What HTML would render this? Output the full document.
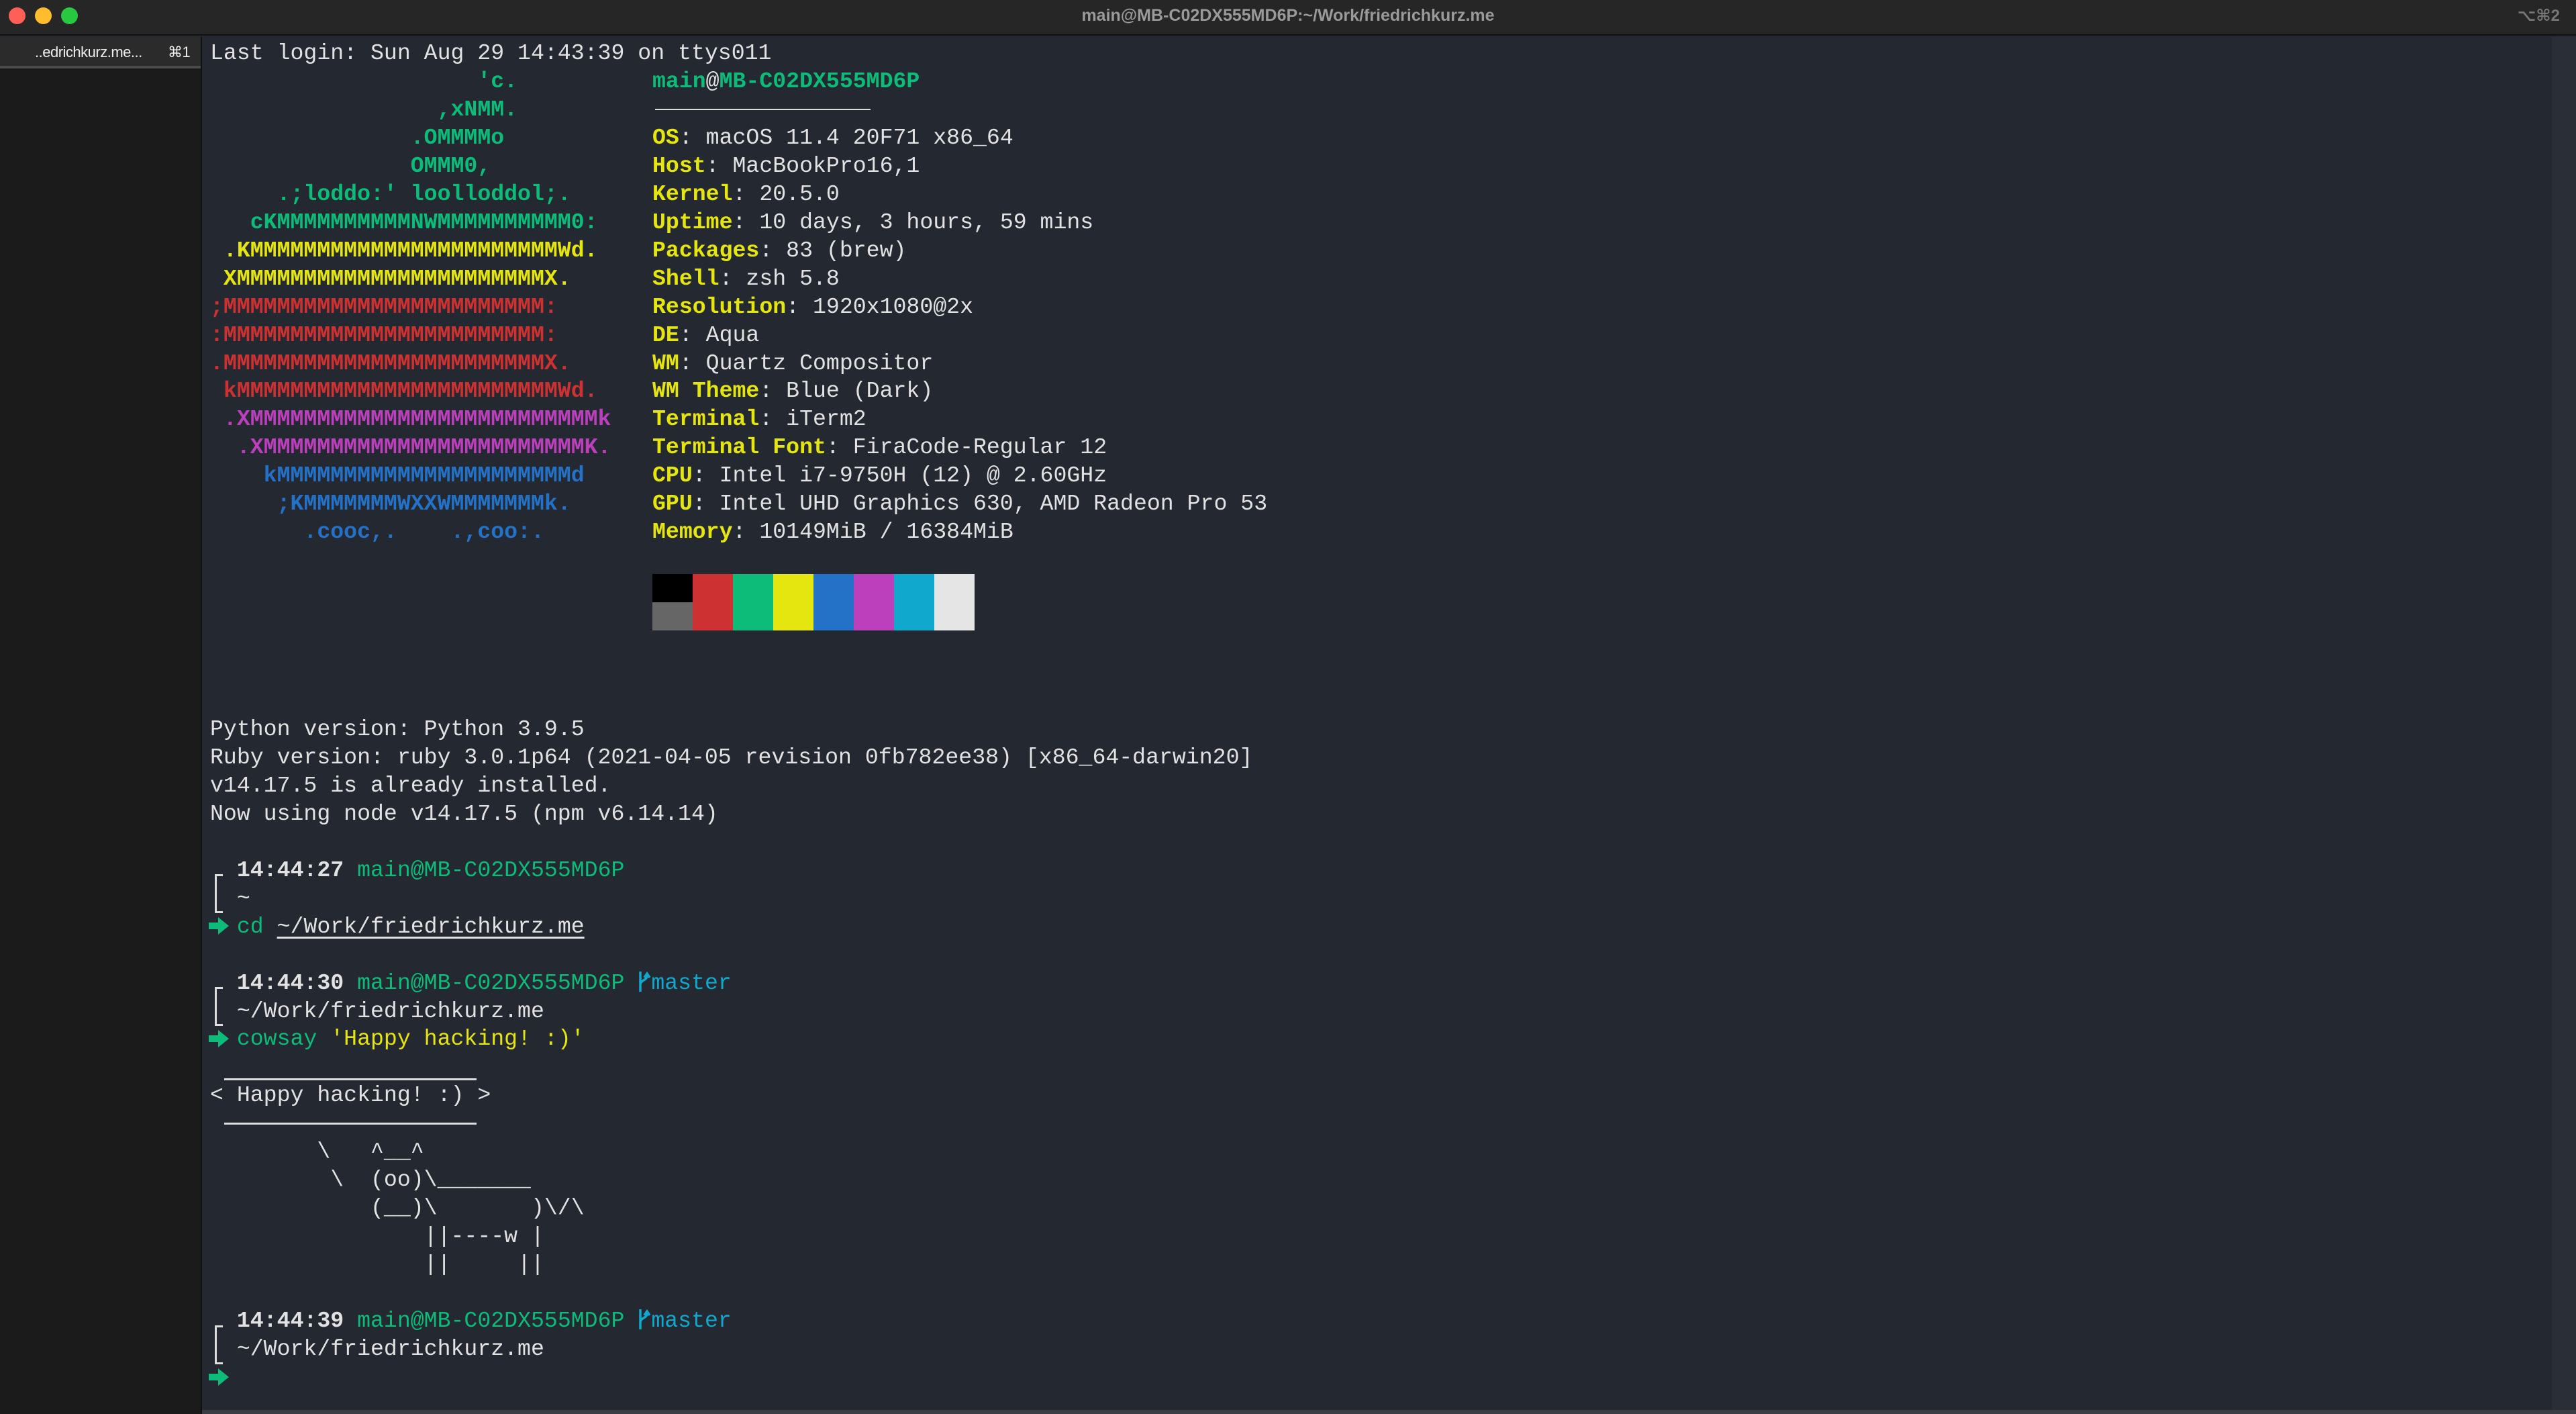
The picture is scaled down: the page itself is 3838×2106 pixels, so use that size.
<!DOCTYPE html>
<html><head><meta charset="utf-8">
<style>
*{margin:0;padding:0;box-sizing:border-box}
html,body{width:3838px;height:2106px;overflow:hidden;background:#242830}
body{position:relative;font-family:"Liberation Mono","DejaVu Sans Mono",monospace}
.title{position:absolute;left:0;top:0;width:3838px;height:53px;background:#262626;border-bottom:2px solid #111}
.tl{position:absolute;top:11px;width:25px;height:25px;border-radius:50%}
.ttext{position:absolute;left:0;width:3838px;top:9px;text-align:center;color:#9a9a9a;font:bold 25px "Liberation Sans",sans-serif}
.kbd{position:absolute;right:24px;top:9px;color:#777;font:bold 24px "Liberation Sans","DejaVu Sans",sans-serif}
.side{position:absolute;left:0;top:55px;width:301px;height:2051px;background:#1b1b1b;border-right:2px solid #111}
.tab{position:absolute;left:0;top:0;width:299px;height:47px;background:#2b2b2b;border-bottom:4px solid #4a4a4a}
.tab span{position:absolute;top:10px;color:#eee;font:22px "Liberation Sans","DejaVu Sans",sans-serif;letter-spacing:-0.5px}
.scroll{position:absolute;right:0;top:55px;width:36px;height:2051px;background:#2a2e36}
.bottom{position:absolute;left:301px;right:0;bottom:0;height:6px;background:#3a3d44}
pre{position:absolute;font-family:"Liberation Mono","DejaVu Sans Mono",monospace;font-size:33.2px;line-height:41.96px;color:#e2e2e2;white-space:pre}
.g{color:#0dbc79}.y{color:#e5e510}.r{color:#cd3131}.m{color:#bc3fbc}.b{color:#2472c8}.c{color:#11a8cd}
.k{font-weight:bold}
.u{text-decoration:underline;text-underline-offset:6px}
.blk{position:absolute;width:60px}
.br{position:absolute;left:320px;width:12px;border:3px solid #ddd;border-right:none;height:58px}
.hl{position:absolute;height:3px;background:#ddd}
.ar{position:absolute;left:311px;width:30px;height:26px}
.brn{display:inline-block;width:20px;height:34px;vertical-align:-6px}
</style></head><body>
<div class="title">
<div class="tl" style="left:13px;background:#fe5f57"></div>
<div class="tl" style="left:52px;background:#febc2e"></div>
<div class="tl" style="left:91px;background:#28c840"></div>
<div class="ttext">main@MB-C02DX555MD6P:~/Work/friedrichkurz.me</div>
<div class="kbd">⌥⌘2</div>
</div>
<div class="side"><div class="tab"><span style="left:52px">..edrichkurz.me...</span><span style="left:250px">⌘1</span></div></div>
<div class="scroll"></div>
<div class="bottom"></div>

<pre style="left:313px;top:59px">Last login: Sun Aug 29 14:43:39 on ttys011</pre>

<pre style="left:313px;top:101px" class="k"><span class="g">                    'c.
                 ,xNMM.
               .OMMMMo
               OMMM0,
     .;loddo:' loolloddol;.
   cKMMMMMMMMMMNWMMMMMMMMMM0:</span>
<span class="y"> .KMMMMMMMMMMMMMMMMMMMMMMMWd.
 XMMMMMMMMMMMMMMMMMMMMMMMX.</span>
<span class="r">;MMMMMMMMMMMMMMMMMMMMMMMM:
:MMMMMMMMMMMMMMMMMMMMMMMM:
.MMMMMMMMMMMMMMMMMMMMMMMMX.
 kMMMMMMMMMMMMMMMMMMMMMMMMWd.</span>
<span class="m"> .XMMMMMMMMMMMMMMMMMMMMMMMMMMk
  .XMMMMMMMMMMMMMMMMMMMMMMMMK.</span>
<span class="b">    kMMMMMMMMMMMMMMMMMMMMMMd
     ;KMMMMMMMWXXWMMMMMMMk.
       .cooc,.    .,coo:.</span></pre>

<pre style="left:972px;top:101px"><span class="g k">main</span>@<span class="g k">MB-C02DX555MD6P</span>

<span class="y k">OS</span>: macOS 11.4 20F71 x86_64
<span class="y k">Host</span>: MacBookPro16,1
<span class="y k">Kernel</span>: 20.5.0
<span class="y k">Uptime</span>: 10 days, 3 hours, 59 mins
<span class="y k">Packages</span>: 83 (brew)
<span class="y k">Shell</span>: zsh 5.8
<span class="y k">Resolution</span>: 1920x1080@2x
<span class="y k">DE</span>: Aqua
<span class="y k">WM</span>: Quartz Compositor
<span class="y k">WM Theme</span>: Blue (Dark)
<span class="y k">Terminal</span>: iTerm2
<span class="y k">Terminal Font</span>: FiraCode-Regular 12
<span class="y k">CPU</span>: Intel i7-9750H (12) @ 2.60GHz
<span class="y k">GPU</span>: Intel UHD Graphics 630, AMD Radeon Pro 53
<span class="y k">Memory</span>: 10149MiB / 16384MiB</pre>
<div class="hl" style="left:976px;width:321px;top:162px;height:2px"></div>

<div class="blk" style="left:972px;top:855px;height:42px;background:#000"></div>
<div class="blk" style="left:972px;top:897px;height:42px;background:#666"></div>
<div class="blk" style="left:1032px;top:855px;height:84px;background:#cd3131"></div>
<div class="blk" style="left:1092px;top:855px;height:84px;background:#0dbc79"></div>
<div class="blk" style="left:1152px;top:855px;height:84px;background:#e5e510"></div>
<div class="blk" style="left:1212px;top:855px;height:84px;background:#2472c8"></div>
<div class="blk" style="left:1272px;top:855px;height:84px;background:#bc3fbc"></div>
<div class="blk" style="left:1332px;top:855px;height:84px;background:#11a8cd"></div>
<div class="blk" style="left:1392px;top:855px;height:84px;background:#e5e5e5"></div>

<pre style="left:313px;top:1066px">Python version: Python 3.9.5
Ruby version: ruby 3.0.1p64 (2021-04-05 revision 0fb782ee38) [x86_64-darwin20]
v14.17.5 is already installed.
Now using node v14.17.5 (npm v6.14.14)

  <span class="k">14:44:27</span> <span class="g">main@MB-C02DX555MD6P</span>
  ~
  <span class="g">cd</span> <span class="u">~/Work/friedrichkurz.me</span>

  <span class="k">14:44:30</span> <span class="g">main@MB-C02DX555MD6P</span> <span class="c"><svg class="brn" viewBox="0 0 20 34"><path d="M4 2V32M4 22C4 14 14 16 14 8M10 11L14 5L18 11" stroke="#11a8cd" stroke-width="3.5" fill="none"/></svg>master</span>
  ~/Work/friedrichkurz.me
  <span class="g">cowsay</span> <span class="y">'Happy hacking! :)'</span>

&lt; Happy hacking! :) &gt;

        \   ^__^
         \  (oo)\_______
            (__)\       )\/\
                ||----w |
                ||     ||

  <span class="k">14:44:39</span> <span class="g">main@MB-C02DX555MD6P</span> <span class="c"><svg class="brn" viewBox="0 0 20 34"><path d="M4 2V32M4 22C4 14 14 16 14 8M10 11L14 5L18 11" stroke="#11a8cd" stroke-width="3.5" fill="none"/></svg>master</span>
  ~/Work/friedrichkurz.me
</pre>

<svg class="ar" style="top:1366px" viewBox="0 0 30 26"><path d="M0 8H14V0L30 13L14 26V18H0Z" fill="#0dbc79"/></svg>
<svg class="ar" style="top:1534px" viewBox="0 0 30 26"><path d="M0 8H14V0L30 13L14 26V18H0Z" fill="#0dbc79"/></svg>
<svg class="ar" style="top:2038px" viewBox="0 0 30 26"><path d="M0 8H14V0L30 13L14 26V18H0Z" fill="#0dbc79"/></svg>

<div class="br" style="top:1302px"></div>
<div class="br" style="top:1470px"></div>
<div class="br" style="top:1974px"></div>
<div class="hl" style="left:334px;width:376px;top:1606px"></div>
<div class="hl" style="left:334px;width:376px;top:1672px"></div>
</body></html>
